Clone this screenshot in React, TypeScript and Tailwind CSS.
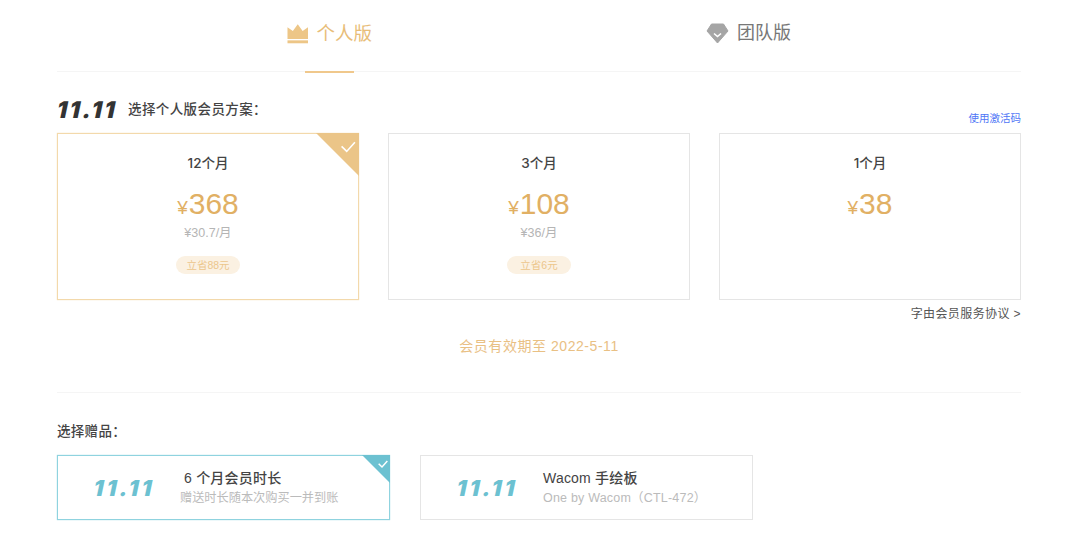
import React from 'react';

const cjk = "font-['Liberation_Sans','Noto_Sans_CJK_SC',sans-serif]";

const plans = [
  { name: '12个月', price: '368', perMonth: '¥30.7/月', save: '立省88元', selected: true },
  { name: '3个月', price: '108', perMonth: '¥36/月', save: '立省6元', selected: false },
  { name: '1个月', price: '38', perMonth: '', save: '', selected: false },
];

const Crown = () => (
  <svg width="22" height="20" viewBox="0 0 22 20" fill="#edc687">
    <path d="M0.5 3 L6 7 L11 0 L16 7 L21.5 3 V15 H0.5 Z" />
    <rect x="0.5" y="16.5" width="21" height="3" />
  </svg>
);

const Diamond = () => (
  <svg width="23" height="21" viewBox="0 0 23 21">
    <path d="M5.5 1 H17.5 L22 8 L11.5 20 L1 8 Z" fill="#a5a5a5" stroke="#a5a5a5" strokeLinejoin="round" />
    <path d="M8 10.5 L11.5 13.5 L15 10.5" fill="none" stroke="#fff" strokeWidth="1.6" />
  </svg>
);

const Corner = ({ size, color, check }: { size: number; color: string; check: number }) => (
  <svg className="absolute -top-px -right-px" width={size} height={size} viewBox="0 0 42 42">
    <path d="M0 0 H42 V42 Z" fill={color} />
    <path d="M25 13 L30 18 L38 9" fill="none" stroke="#fff" strokeWidth={check} />
  </svg>
);

const Logo = ({ className }: { className: string }) => (
  <span className={`font-['Inter',sans-serif] font-black -skew-x-12 inline-block leading-none whitespace-nowrap ${className}`}>11.11</span>
);

export default function App() {
  return (
    <div className={`${cjk} w-[1080px] h-[541px] bg-white px-[57px] pr-[59px] overflow-hidden`}>
      <div className="flex h-[72px] border-b border-[#f5f5f5]">
        <div className="relative h-[72px] w-[85px] ml-[230px] flex items-center gap-2 pb-[5px] text-[18.5px] text-[#e8bd78]">
          <Crown />
          <span className="whitespace-nowrap">个人版</span>
          <div className="absolute left-[18px] -bottom-px w-[49px] h-[2px] bg-[#f0c88c]" />
        </div>
        <div className="h-[72px] ml-[334px] flex items-center gap-2 pb-[5px] text-[18px] text-[#777777]">
          <Diamond />
          <span>团队版</span>
        </div>
      </div>

      <div className="flex justify-between items-end h-[61px] pb-[6px]">
        <div className="flex items-center gap-[10px] mb-[5px]">
          <Logo className="text-[23px] w-[61px] tracking-[2.5px] text-[#333333]" />
          <span className="text-[13.5px] tracking-[0.4px] font-medium text-[#444444]">选择个人版会员方案：</span>
        </div>
        <a className="text-[10.5px] text-[#4f76f6]">使用激活码</a>
      </div>

      <div className="grid grid-cols-3 gap-[29px]">
        {plans.map((p) => (
          <div
            key={p.name}
            className={`relative h-[167px] border flex flex-col items-center pt-[20px] ${
              p.selected ? 'border-[#f3d9ab] shadow-[0_0_1px_#f3d9ab]' : 'border-[#e5e5e5]'
            }`}
          >
            {p.selected && <Corner size={43} color="#ebc588" check={1.6} />}
            <div className="font-['Inter','Noto_Sans_CJK_SC',sans-serif] text-[13.5px] leading-[18px] font-medium text-[#444444]">{p.name}</div>
            <div className="mt-[12px] flex items-baseline leading-[40px] text-[#e1b064]">
              <span className="text-[19px] mr-[1px]">¥</span>
              <span className="text-[30px]">{p.price}</span>
            </div>
            {p.perMonth && <div className="-mt-[4px] text-[12.5px] leading-[18px] text-[#b5b5b5]">{p.perMonth}</div>}
            {p.save && (
              <div className="mt-[14px] h-[18px] w-[64px] text-center rounded-full bg-[#fbf1e2] text-[10.5px] leading-[18px] text-[#ecc68c]">
                {p.save}
              </div>
            )}
          </div>
        ))}
      </div>

      <div className="mt-[6px] text-right text-[12px] leading-[16px] tracking-[0.4px] text-[#555555]">字由会员服务协议 &gt;</div>

      <div className="mt-[14px] text-center text-[14px] leading-[20px] tracking-[0.55px] text-[#e9c084]">会员有效期至 2022-5-11</div>

      <div className="mt-[36px] border-t border-[#f5f5f5]" />

      <div className="mt-[30px] text-[13.5px] leading-[18px] tracking-[0.3px] font-medium text-[#444444]">选择赠品：</div>

      <div className="mt-[14px] flex gap-[30px]">
        <div className="relative w-[333px] h-[65px] border border-[#8fd3df] shadow-[0_0_1px_#8fd3df] flex items-center">
          <Corner size={28} color="#6cc1d1" check={2.2} />
          <Logo className="ml-[36px] w-[62px] text-[22px] tracking-[3px] text-[#6cc1d1]" />
          <div className="ml-[24px]">
            <div className="text-[14px] leading-[20px] tracking-[0.2px] font-medium text-[#444444]">&nbsp;6 个月会员时长</div>
            <div className="mt-[1px] text-[12.2px] leading-[19px] text-[#bbbbbb]">赠送时长随本次购买一并到账</div>
          </div>
        </div>
        <div className="w-[333px] h-[65px] border border-[#e5e5e5] flex items-center">
          <Logo className="ml-[36px] w-[62px] text-[22px] tracking-[3px] text-[#6cc1d1]" />
          <div className="ml-[24px]">
            <div className="text-[14px] leading-[20px] tracking-[0.2px] font-medium text-[#444444]">Wacom 手绘板</div>
            <div className="mt-[1px] text-[12.5px] leading-[19px] tracking-[0.2px] text-[#bbbbbb]">One by Wacom（CTL-472）</div>
          </div>
        </div>
      </div>
    </div>
  );
}
